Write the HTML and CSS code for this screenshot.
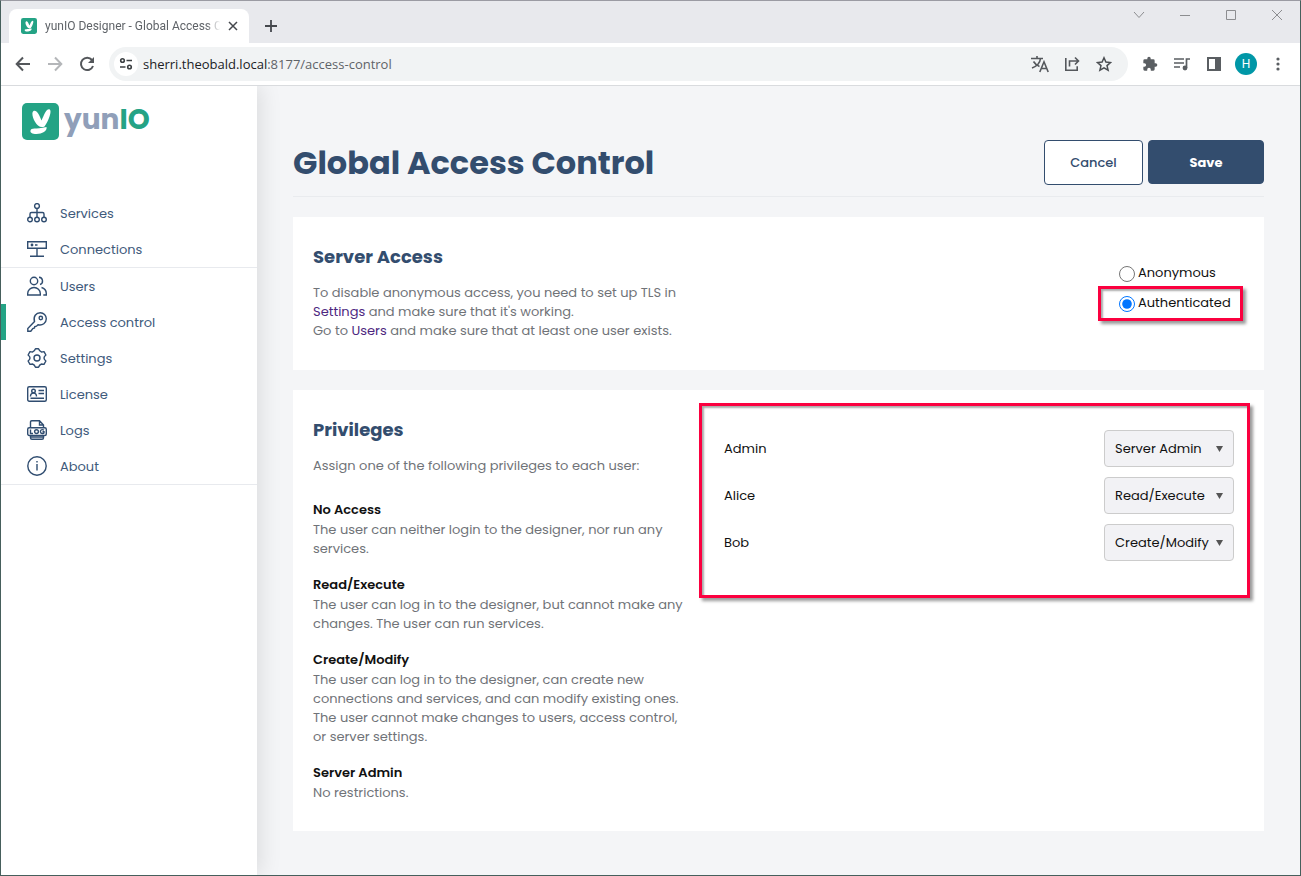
FILE: index.html
```html
<!DOCTYPE html>
<html lang="en">
<head>
<meta charset="utf-8">
<title>yunIO Designer - Global Access Control</title>
<link rel="stylesheet" href="styles.css">
</head>
<body>
<div class="window">
  <header class="tabstrip">
    <div class="tab">
      <svg class="favicon" viewBox="0 0 37 37"><rect width="37" height="37" rx="5" fill="#24a385"/><g fill="#fff"><path d="M11.500 8C14.500 6.500 17.500 12 19.500 17.500C22 12 24 5.500 27.500 6.200C30.500 7.500 26.500 18 22.500 23.500Q19 25 16 22.500C12 19 8.500 10 11.500 8Z"/><path d="M8.500 27.500C9.500 24.500 13 26.500 24.500 24C25.500 28 20 31 14.500 31C10 31 8 29.500 8.500 27.500Z"/></g></svg>
      <span class="tab-title">yunIO Designer - Global Access C</span>
      <button class="tab-close" aria-label="Close tab"><svg width="10" height="10" viewBox="0 0 10 10"><path d="M1 1l8 8M9 1L1 9" stroke="#45484d" stroke-width="1.500"/></svg></button>
    </div>
    <button class="new-tab" aria-label="New tab"><svg width="12" height="12" viewBox="0 0 12 12"><path d="M6 0v12M0 6h12" stroke="#45484d" stroke-width="1.800"/></svg></button>
    <div class="window-buttons">
      <button aria-label="Search tabs"><svg width="12" height="12" viewBox="0 0 12 12"><path d="M1 3l5 5.500L11 3" fill="none" stroke="#8c8d90"/></svg></button>
      <button aria-label="Minimize"><svg width="12" height="12" viewBox="0 0 12 12"><path d="M1 6.500h10" stroke="#8c8d90"/></svg></button>
      <button aria-label="Maximize"><svg width="12" height="12" viewBox="0 0 12 12"><path d="M1.500 1.500h9v9h-9z" fill="none" stroke="#8c8d90"/></svg></button>
      <button aria-label="Close"><svg width="12" height="12" viewBox="0 0 12 12"><path d="M1 1l10 10M11 1L1 11" stroke="#8c8d90"/></svg></button>
    </div>
  </header>
  <div class="toolbar">
    <div class="nav-buttons">
      <button aria-label="Back"><svg width="16" height="16" viewBox="0 0 16 16"><path d="M15 8H2M8 1.500L1.700 8 8 14.500" fill="none" stroke="#54575b" stroke-width="2"/></svg></button>
      <button aria-label="Forward"><svg width="16" height="16" viewBox="0 0 16 16"><path d="M1 8h13M8 1.500L14.300 8 8 14.500" fill="none" stroke="#b4b6b9" stroke-width="2"/></svg></button>
      <button aria-label="Reload"><svg width="16" height="16" viewBox="0 0 16 16"><path d="M13 4A6.200 6.200 0 1 0 14 10" fill="none" stroke="#54575b" stroke-width="2"/><path d="M15 1v6H9z" fill="#54575b"/></svg></button>
    </div>
    <div class="omnibox">
      <button class="site-info" aria-label="Site information"><svg width="14" height="14" viewBox="0 0 14 14"><g fill="none" stroke="#3c4043" stroke-width="1.600"><circle cx="3.500" cy="3.500" r="1.800"/><path d="M7.500 3.500H13M1 10h5.500"/><circle cx="10.500" cy="10" r="1.800"/></g></svg></button>
      <div class="url"><span class="host">sherri.theobald.local</span>:8177/access-control</div>
      <div class="omnibox-actions">
        <button aria-label="Translate"><svg width="20" height="18" viewBox="0 0 20 18"><g fill="none" stroke="#55585c" stroke-width="1.600"><path d="M1 3.500h12M7 1v2.500M10.500 3.500C10 8 6 11.500 2 13M3.500 6.500C5 9 7 10.500 9.500 11.500"/><path d="M9.800 17L14 6.800 18.200 17M11.300 13.500h5.400"/></g></svg></button>
        <button aria-label="Share"><svg width="16" height="16" viewBox="0 0 16 16"><path d="M1.800 2v12.200h11.400v-4M5.500 10.500V5H14M11 1.500L14.500 5 11 8.500" fill="none" stroke="#55585c" stroke-width="1.600"/></svg></button>
        <button aria-label="Bookmark"><svg width="16" height="16" viewBox="0 0 16 16"><path d="M8 1.800l1.900 4.300 4.600.4-3.500 3.100 1.100 4.600L8 11.800l-4.100 2.400L5 9.600 1.500 6.500l4.600-.4z" fill="none" stroke="#4b4e52" stroke-width="1.500"/></svg></button>
      </div>
    </div>
    <div class="tools">
      <button aria-label="Extensions"><svg width="16" height="16" viewBox="0 0 24 24"><path d="M20.500 11H19V7a2 2 0 0 0-2-2h-4V3.500a2.500 2.500 0 0 0-5 0V5H4a2 2 0 0 0-2 2v3.800h1.500a2.700 2.700 0 0 1 0 5.400H2V20a2 2 0 0 0 2 2h3.800v-1.500a2.700 2.700 0 0 1 5.400 0V22H17a2 2 0 0 0 2-2v-4h1.500a2.500 2.500 0 0 0 0-5z" fill="#5a5e62"/></svg></button>
      <button aria-label="Media control"><svg width="16" height="16" viewBox="0 0 16 16"><path d="M0 3h10M0 7h10M0 11h6M12.500 12V3H16" fill="none" stroke="#5a5e62" stroke-width="1.700"/><circle cx="11" cy="12" r="2.400" fill="#5a5e62"/></svg></button>
      <button aria-label="Side panel"><svg width="16" height="16" viewBox="0 0 16 16"><path d="M2 2h12v12H2z" fill="none" stroke="#5a5e62" stroke-width="2"/><path d="M9 2h5v12H9z" fill="#5a5e62"/></svg></button>
      <button class="avatar" aria-label="Profile">H</button>
      <button aria-label="Menu"><svg width="16" height="16" viewBox="0 0 16 16" fill="#5a5e62"><circle cx="8" cy="3" r="1.600"/><circle cx="8" cy="8" r="1.600"/><circle cx="8" cy="13" r="1.600"/></svg></button>
    </div>
  </div>

  <div class="app">
    <aside class="sidebar">
      <div class="logo">
        <svg width="37" height="37" viewBox="0 0 37 37"><rect width="37" height="37" rx="5" fill="#24a385"/><g fill="#fff"><path d="M11.500 8C14.500 6.500 17.500 12 19.500 17.500C22 12 24 5.500 27.500 6.200C30.500 7.500 26.500 18 22.500 23.500Q19 25 16 22.500C12 19 8.500 10 11.500 8Z"/><path d="M8.500 27.500C9.500 24.500 13 26.500 24.500 24C25.500 28 20 31 14.500 31C10 31 8 29.500 8.500 27.500Z"/></g></svg>
        <span class="wordmark">yun<b>IO</b></span>
      </div>
      <nav class="menu">
        <a href="#"><svg viewBox="0 0 20 20"><circle cx="10" cy="3" r="2.400"/><circle cx="3" cy="16.500" r="2.300"/><circle cx="10" cy="16.500" r="2.300"/><circle cx="17" cy="16.500" r="2.300"/><path d="M10 5.400v8.800M3 14.200V11q0-1.500 1.500-1.500h11q1.500 0 1.500 1.500v3.200"/></svg>Services</a>
        <a href="#" class="group-end"><svg viewBox="0 0 20 20"><path d="M.7 2.700h18.600v6.600H.7zM10 9.300v7.500M3 17.300h14M8 6h2.500"/><circle cx="5" cy="6" r=".7"/></svg>Connections</a>
        <a href="#"><svg viewBox="0 0 20 20"><circle cx="7" cy="5" r="3.700"/><path d="M.7 19v-1.500a6.300 6 0 0 1 12.600 0V19zM12 1.300a3.700 3.700 0 0 1 1 7.200M14.500 11.500c3 .8 4.800 3 4.800 6V19h-3"/></svg>Users</a>
        <a href="#" class="active"><svg viewBox="0 0 20 20"><path d="M7.500 9.500C6 4.500 9 .8 13.300.8A6 6 0 0 1 19.300 6.800C19.300 11 15.500 13.800 11 12.700L9.500 14.200 7.800 14.500 7.500 16 5.800 16.500 3.800 19.200H.8V16.500z"/><circle cx="13.800" cy="6" r="1.700"/></svg>Access control</a>
        <a href="#"><svg viewBox="0 0 20 20"><circle cx="10" cy="10" r="3"/><path d="M8.500.8h3Q12.500 3.500 14.500 4Q16 4 17 3.700L18.900 7Q17 8.500 17 10T18.900 13L17 16.300Q16 16 14.500 16Q12.500 16.500 11.500 19.200h-3Q7.500 16.500 5.500 16Q4 16 3 16.300L1.100 13Q3 11.500 3 10T1.100 7L3 3.700Q4 4 5.500 4Q7.500 3.500 8.500.8z" stroke-linejoin="round"/></svg>Settings</a>
        <a href="#"><svg viewBox="0 0 20 20"><rect x=".7" y="2.700" width="18.600" height="14.600" rx="1.500"/><circle cx="6.500" cy="7" r="1.800"/><path d="M3.500 12.500c0-4.500 6-4.500 6 0M11.500 6.500h5.500M11.500 9.500h5.500M3.500 14.300H17"/></svg>License</a>
        <a href="#"><svg viewBox="0 0 20 20"><path d="M3.500 8V2q0-1.300 1.300-1.300h7.700L16.500 5v3M12.500.7V5h4M3.500 16v1.800q0 1.500 1.500 1.500h10q1.500 0 1.500-1.500V16M3.500 17h13"/><rect x=".7" y="7.800" width="18.600" height="7.700" rx="1.500"/><path d="M3.500 9.500v4H6M17 10.200c-2.500-1.500-4 .3-3.500 2 .5 1.500 3 1.700 3.500.8v-1.200h-1.500"/><circle cx="9.500" cy="11.600" r="1.900"/></svg>Logs</a>
        <a href="#" class="group-end"><svg viewBox="0 0 20 20"><circle cx="10" cy="10" r="9.200"/><path d="M10 8v6.500M10 5v1.600"/></svg>About</a>
      </nav>
    </aside>

    <main class="content">
      <div class="page-head">
        <h1>Global Access Control</h1>
        <div class="actions">
          <button class="btn btn-cancel">Cancel</button>
          <button class="btn btn-save">Save</button>
        </div>
      </div>

      <section class="card server-card">
        <div class="description">
          <h2>Server Access</h2>
          <p>To disable anonymous access, you need to set up TLS in <a href="#">Settings</a> and make sure that it's working.<br>Go to <a href="#">Users</a> and make sure that at least one user exists.</p>
        </div>
        <div class="access-options">
          <label><input type="radio" name="access">Anonymous</label>
          <label class="marked"><input type="radio" name="access" checked>Authenticated</label>
        </div>
      </section>

      <section class="card privileges-card">
        <div class="description">
          <h2>Privileges</h2>
          <p>Assign one of the following privileges to each user:</p>
          <dl>
            <dt>No Access</dt>
            <dd>The user can neither login to the designer, nor run any services.</dd>
            <dt>Read/Execute</dt>
            <dd>The user can log in to the designer, but cannot make any changes. The user can run services.</dd>
            <dt>Create/Modify</dt>
            <dd>The user can log in to the designer, can create new connections and services, and can modify existing ones. The user cannot make changes to users, access control, or server settings.</dd>
            <dt>Server Admin</dt>
            <dd>No restrictions.</dd>
          </dl>
        </div>
        <div class="users">
          <div class="user-row"><label for="u1">Admin</label><select id="u1"><option>Server Admin</option></select></div>
          <div class="user-row"><label for="u2">Alice</label><select id="u2"><option>Read/Execute</option></select></div>
          <div class="user-row"><label for="u3">Bob</label><select id="u3"><option>Create/Modify</option></select></div>
        </div>
      </section>
    </main>
  </div>
</div>
</body>
</html>
```
FILE: styles.css
```css
* { box-sizing: border-box; }
body { margin: 0; font-family: Poppins, Inter, sans-serif; font-size: 13px; line-height: 19px; color: #111; }
button { border: 0; padding: 0; background: none; font: inherit; display: flex; align-items: center; justify-content: center; }
svg { display: block; flex: none; }
h1, h2, p, dl, dd { margin: 0; }

.window { min-height: 100vh; display: flex; flex-direction: column; border: 1px solid #465f5c; border-top-color: #9b9ba3; }

.tabstrip { height: 42px; background: #e8e9ed; display: flex; align-items: flex-start; padding: 8px 5px 0 8px; }
.tab { width: 240px; height: 34px; padding: 0 11px 0 12px; display: flex; align-items: center; background: #fff; border-radius: 8px 8px 0 0; }
.favicon { width: 16px; height: 16px; }
.tab-title { flex: 1; margin: 0 4px 0 8px; white-space: nowrap; font: 12px/18px Roboto, sans-serif; color: #5f6368; mask-image: linear-gradient(90deg, #000 90%, transparent 98%); }
.tab-close { width: 10px; height: 20px; }
.new-tab { width: 28px; height: 34px; margin-left: 8px; }
.window-buttons { display: flex; margin: -8px 0 0 auto; }
.window-buttons button { width: 46px; height: 28px; }
.window-buttons button:last-child { width: 36px; margin-left: 5px; }

.toolbar { height: 43px; display: flex; align-items: center; background: #fff; border-bottom: 1px solid #d9dbde; font-family: "Open Sans", sans-serif; }
.nav-buttons { display: flex; gap: 16px; padding: 0 14px; }
.omnibox { flex: 1; height: 34px; display: flex; align-items: center; background: #f1f3f4; border-radius: 17px; padding: 0 16px 0 5px; }
.site-info { width: 24px; height: 24px; border-radius: 50%; background: #fff; }
.url { flex: 1; margin-left: 5px; color: #5f6368; white-space: nowrap; }
.host { color: #202124; }
.omnibox-actions { display: flex; gap: 16px; align-items: center; }
.omnibox-actions button:first-child { margin-right: -2px; }
.tools { display: flex; align-items: center; gap: 16px; padding: 0 14px; }
.tools .avatar { width: 22px; height: 22px; margin: 0 -3px; border-radius: 50%; background: #0097a7; color: #fff; font: 12px Roboto, sans-serif; }

.app { flex: 1; display: flex; background: #f4f5f7; overflow: hidden; }
.sidebar { width: 256px; flex: none; background: #fff; box-shadow: 4px 0 20px #0000001a; }
.logo { display: flex; align-items: center; gap: 5px; padding: 17px 21px 0; }
.wordmark { font-size: 28px; line-height: 34px; padding-bottom: 3px; font-weight: 700; color: #909fb9; }
.wordmark b { font-weight: 700; color: #24a385; }
.menu { margin-top: 55px; }
.menu a { height: 36px; display: flex; align-items: center; gap: 13px; padding-left: 26px; color: #405a7b; text-decoration: none; }
.menu .group-end { height: 37px; border-bottom: 1px solid #e8eaee; }
.menu .active { padding-left: 21px; border-left: 5px solid #24a385; }
.menu svg { width: 20px; height: 20px; fill: none; stroke: #304d70; stroke-width: 1.400; }

.content { flex: 1; min-width: 0; padding: 54px 36px 44px; }
.page-head { display: flex; justify-content: space-between; padding-bottom: 11px; border-bottom: 1px solid #e9ebee; }
h1 { font-size: 32px; line-height: 45px; color: #334d6e; white-space: nowrap; }
.actions { display: flex; gap: 5px; }
.btn { height: 45px; border: 1px solid #334d6e; border-radius: 4px; font-weight: 500; }
.btn-cancel { width: 99px; background: #fff; color: #334d6e; }
.btn-save { width: 116px; height: 44px; background: #334d6e; color: #fff; font-weight: 700; }

.card { display: flex; margin-top: 20px; background: #fff; padding: 26px 20px 30px; }
.description { width: 380px; flex: none; color: #707378; }
h2 { font-size: 18px; line-height: 27px; margin-bottom: 13px; color: #334d6e; }
.description a { color: #4d2780; text-decoration: none; }
.access-options { margin: 14px 0 0 auto; width: 125px; }
.access-options label { position: relative; display: flex; align-items: center; gap: 3px; height: 30px; }
.access-options input { width: 16px; height: 16px; margin: 3px 0 0; accent-color: #0075ff; }
.marked::after { content: ""; position: absolute; inset: -1px 1px -4px -21px; border: 3px solid #fb003f; box-shadow: 3px 3px 3px #0006, inset 2px 2px 2px #0005; }

.privileges-card { padding: 13px 14px 29px 20px; }
.privileges-card .description { padding-top: 13px; }
dl { margin-top: 25px; }
dt { font-weight: 600; color: #111; }
dd { margin: 1px 0 17px; }
dd:last-child { margin-bottom: 0; }
.users { flex: 1; align-self: flex-start; margin-left: 6px; padding: 24px 13px 34px 22px; border: 3px solid #fb003f; box-shadow: 3px 3px 3px #0006, inset 2px 2px 2px #0005; display: grid; gap: 10px; }
.user-row { display: flex; justify-content: space-between; align-items: center; }
select { appearance: none; width: 130px; height: 37px; padding: 0 10px; border: 1px solid #ccc; border-radius: 4px; color: #111; font: inherit;
  background: #f2f2f5 url("data:image/svg+xml,%3Csvg xmlns='http://www.w3.org/2000/svg' width='7' height='6'%3E%3Cpath d='M0 0h7L3.500 6z' fill='%23555'/%3E%3C/svg%3E") no-repeat right 10px center; }
```
